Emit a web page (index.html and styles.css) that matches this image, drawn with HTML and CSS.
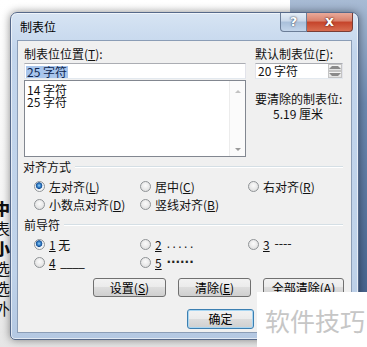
FILE: index.html
```html
<!DOCTYPE html>
<html>
<head>
  <title>制表位</title>
  <link rel="stylesheet" href="styles.css">
</head>
<body>
  <div class="desk">
    <div class="doc">
      <div class="doc-text">
        <b>中</b><span>表</span><b>小</b><span>选</span><span>选</span><span>外</span>
      </div>
    </div>
    <div class="blue"></div>
  </div>

  <div class="dialog">
    <div class="titlebar">
      <span class="title">制表位</span>
      <div class="caption-btns">
        <div class="cap-help">?</div>
        <div class="cap-close">x</div>
      </div>
    </div>

    <div class="client">
      <div class="top-row">
        <div class="left-col">
          <div class="label">制表位位置(<u>T</u>):</div>
          <div class="textbox"><span class="sel">25 字符</span></div>
          <div class="listbox">
            <div class="items">
              <div>14 字符</div>
              <div>25 字符</div>
            </div>
            <div class="vscroll">
              <span class="arr up"></span>
              <span class="arr down"></span>
            </div>
          </div>
        </div>
        <div class="right-col">
          <div class="label">默认制表位(<u>F</u>):</div>
          <div class="spin">
            <span>20 字符</span>
            <div class="spin-btns">
              <div class="sb"><span class="arr up"></span></div>
              <div class="sb"><span class="arr down"></span></div>
            </div>
          </div>
          <div class="label clear-label">要清除的制表位:</div>
          <div class="label clear-value">5.19 厘米</div>
        </div>
      </div>

      <div class="group-title"><span>对齐方式</span><i></i></div>
      <div class="radio-grid">
        <label><span class="radio on"></span>左对齐(<u>L</u>)</label>
        <label><span class="radio"></span>居中(<u>C</u>)</label>
        <label><span class="radio"></span>右对齐(<u>R</u>)</label>
        <label><span class="radio"></span>小数点对齐(<u>D</u>)</label>
        <label><span class="radio"></span>竖线对齐(<u>B</u>)</label>
      </div>

      <div class="group-title lead"><span>前导符</span><i></i></div>
      <div class="radio-grid">
        <label><span class="radio on"></span><u>1</u>&nbsp;无</label>
        <label><span class="radio"></span><u>2</u>&nbsp;<span class="leader dots">.....</span></label>
        <label><span class="radio"></span><u>3</u>&nbsp;<span class="leader">----</span></label>
        <label><span class="radio"></span><u>4</u>&nbsp;<span class="leader">____</span></label>
        <label><span class="radio"></span><u>5</u>&nbsp;<span class="leader bold">......</span></label>
      </div>

      <div class="btn-row">
        <button class="btn">设置(<u>S</u>)</button>
        <button class="btn">清除(<u>E</u>)</button>
        <button class="btn">全部清除(<u>A</u>)</button>
      </div>
      <div class="btn-row second">
        <button class="btn default">确定</button>
        <button class="btn">取消</button>
      </div>
    </div>
  </div>

  <div class="watermark">软件技巧</div>
</body>
</html>
```

FILE: styles.css
```css
html, body {
  margin: 0;
  padding: 0;
}
body {
  width: 367px;
  height: 347px;
  overflow: hidden;
  position: relative;
  font-family: "Noto Sans CJK SC", "DejaVu Sans", sans-serif;
  font-size: 12px;
  color: #111;
}

/* background windows */
.desk {
  display: flex;
  height: 100%;
}
.doc {
  width: 290px;
  background: linear-gradient(#ffffff, #f4f4f4 70%, #e6e6e6);
  overflow: hidden;
}
.doc-text {
  display: flex;
  flex-direction: column;
  margin-top: 198px;
  margin-left: -6px;
  font-size: 16px;
  line-height: 20px;
  font-family: "Noto Sans CJK SC", sans-serif;
}
.doc-text b {
  font-weight: 900;
}
.blue {
  flex: 1;
  background: linear-gradient(#a8bbd4, #6d89b0 30%, #3e5b86);
}

/* dialog window */
.dialog {
  position: absolute;
  left: 10px;
  top: 12px;
  width: 335px;
  padding: 0 6px 6px;
  border: 1px solid #56698a;
  border-radius: 7px 7px 5px 5px;
  background: linear-gradient(#d7e4f3, #c2d5ec 12%, #bfd2e9 80%, #b4c8e2);
  box-shadow: 0 0 9px rgba(0, 0, 0, 0.45), inset 0 0 0 1px rgba(255, 255, 255, 0.6);
}
.titlebar {
  display: flex;
  height: 27px;
}
.title {
  padding: 7px 0 0 3px;
  font-size: 12px;
  line-height: 14px;
  color: #000;
}
.caption-btns {
  display: flex;
  margin-left: auto;
  margin-right: -1px;
  height: 19px;
}
.cap-help {
  width: 25px;
  border: 1px solid #6b7d97;
  border-top: none;
  border-radius: 0 0 0 4px;
  background: linear-gradient(#e6eef7, #c9d8ea 45%, #a9bfda 50%, #c3d5ea);
  color: #fff;
  font: bold 13px/18px "DejaVu Sans", sans-serif;
  text-align: center;
  text-shadow: 0 0 2px #3b4a63, 0 0 1px #3b4a63;
}
.cap-close {
  width: 45px;
  border: 1px solid #7a3d35;
  border-left: none;
  border-top: none;
  border-radius: 0 0 4px 0;
  background: linear-gradient(#e9aa9a, #d8806b 45%, #c5432a 50%, #d86d50);
  color: #fff;
  font: bold 14px/16px "DejaVu Sans", sans-serif;
  text-align: center;
  text-shadow: 0 0 2px #5a1c12, 0 0 1px #5a1c12;
}

.client {
  height: 291px;
  padding: 0 6px;
  border: 1px solid #8b9db6;
  background: #f0f0f0;
}
.label {
  line-height: 14px;
  white-space: nowrap;
}
u {
  text-decoration: underline;
}

.top-row {
  display: flex;
  padding-top: 6px;
}
.left-col {
  width: 222px;
}
.right-col {
  width: 88px;
  margin-left: 9px;
}
.textbox {
  margin-top: 2px;
  height: 14px;
  border: 1px solid #abadb3;
  border-color: #abadb3 #e2e3ea #e3e9ef;
  background: #fff;
  padding-left: 1px;
  line-height: 14px;
}
.sel {
  display: inline-block;
  padding: 0 1px;
  background: #a8c5ec;
  color: #0e2550;
  line-height: 12px;
  margin-top: 2px;
}
.listbox {
  display: flex;
  margin-top: 1px;
  height: 75px;
  border: 1px solid #828790;
  background: #fff;
}
.items {
  flex: 1;
  padding: 3px 0 0 2px;
  line-height: 12px;
}
.vscroll {
  width: 16px;
  background: #fbfbfb;
  border-left: 1px solid #ececec;
  display: flex;
  flex-direction: column;
  justify-content: space-between;
  align-items: center;
  padding: 9px 0 5px;
  box-sizing: border-box;
}
.arr {
  width: 0;
  height: 0;
  border-left: 3px solid transparent;
  border-right: 3px solid transparent;
}
.arr.up {
  border-bottom: 3px solid #8a8a8a;
}
.arr.down {
  border-top: 3px solid #8a8a8a;
}
.vscroll .arr.up {
  border-bottom-color: #c2c2c2;
}
.vscroll .arr.down {
  border-top-color: #9a9a9a;
}

.spin {
  display: flex;
  align-items: center;
  margin-top: 2px;
  height: 14px;
  border: 1px solid #abadb3;
  border-color: #abadb3 #e2e3ea #e3e9ef;
  background: #fff;
  padding-left: 2px;
  line-height: 14px;
}
.spin span:first-child {
  flex: 1;
}
.spin-btns {
  width: 14px;
  height: 14px;
  display: flex;
  flex-direction: column;
}
.sb {
  flex: 1;
  display: flex;
  align-items: center;
  justify-content: center;
  border: 1px solid #c4c4c4;
  background: linear-gradient(#f6f6f6, #e2e2e2);
}
.clear-label {
  margin-top: 13px;
}
.clear-value {
  padding-left: 18px;
  margin-top: 1px;
}

.group-title {
  display: flex;
  align-items: center;
  margin: 3px 0 0 -1px;
  line-height: 14px;
}
.group-title.lead {
  margin-top: 5px;
  margin-left: 0;
}
.group-title i {
  flex: 1;
  margin: 0 2px 0 4px;
  border-top: 1px solid #d5dfe5;
  border-bottom: 1px solid #fff;
}
.radio-grid {
  display: grid;
  grid-template-columns: 106px 108px 1fr;
  padding: 3px 0 0 10px;
}
.radio-grid label {
  display: flex;
  align-items: center;
  height: 18px;
  white-space: nowrap;
}
.radio {
  width: 11px;
  height: 11px;
  box-sizing: border-box;
  margin-right: 4px;
  border-radius: 50%;
  border: 1px solid #8f9396;
  background: radial-gradient(circle at 50% 40%, #fbfbfb, #e3e3e3 70%, #d0d0d0);
}
.radio.on {
  background: radial-gradient(circle at 45% 40%, #9fd4f6 0, #3f8bd0 1.5px, #164f95 3px, #e6eef6 3.6px, #f7f7f7 5px);
}
.leader {
  font-family: "DejaVu Sans", sans-serif;
  color: #222;
  margin-left: 2px;
}
.leader.dots {
  letter-spacing: 2px;
}
.leader.bold {
  font-weight: bold;
  letter-spacing: 0;
  position: relative;
  top: -3px;
}

.btn-row {
  display: flex;
  gap: 12px;
  justify-content: flex-end;
  margin: 7px 1px 0 0;
}
.btn-row.second {
  margin-top: 12px;
  gap: 9px;
}
.btn {
  width: 73px;
  height: 19px;
  padding: 0;
  border: 1px solid #707070;
  border-radius: 3px;
  background: linear-gradient(#f2f2f2, #ebebeb 50%, #dddddd 50%, #cfcfcf);
  font-family: "Noto Sans CJK SC", sans-serif;
  font-size: 12px;
  line-height: 16px;
  color: #000;
}
.btn-row .btn:last-child {
  width: 81px;
}
.btn.default {
  width: 67px;
  height: 20px;
  border-color: #3c7fb1;
  box-shadow: inset 0 0 0 1px #a8d6f2;
}

.watermark {
  position: absolute;
  left: 257px;
  top: 292px;
  right: 0;
  bottom: 0;
  background: #fff;
  color: #c6c6c6;
  font-size: 25px;
  line-height: 25px;
  padding: 16px 0 0 8px;
  white-space: nowrap;
}
```
